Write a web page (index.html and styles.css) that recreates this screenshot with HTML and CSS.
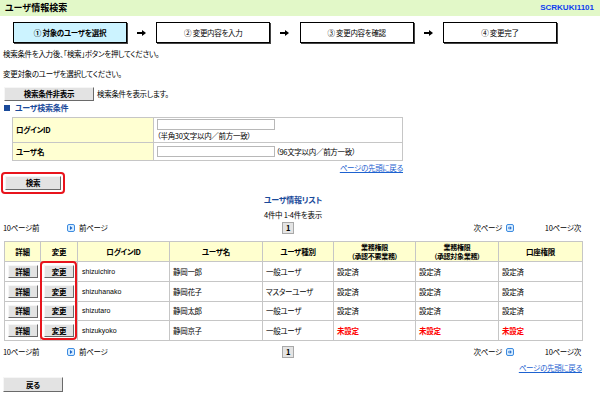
FILE: index.html
```html
<!DOCTYPE html>
<html lang="ja">
<head>
    <meta charset="UTF-8">
    <title>ユーザ情報検索</title>
    <link rel="stylesheet" href="styles.css">
</head>
<body>
    <div class="page-head">
        <span class="page-title">ユーザ情報検索</span>
        <span class="screen-id">SCRKUKI1101</span>
    </div>

    <div class="steps">
        <div class="step current">① 対象のユーザを選択</div>
        <div class="step-arrow"><svg width="9" height="6" viewBox="0 0 9 6"><path d="M0 3H6" stroke="#000" stroke-width="2"/><path d="M5 0L9 3L5 6Z" fill="#000"/></svg></div>
        <div class="step">② 変更内容を入力</div>
        <div class="step-arrow"><svg width="9" height="6" viewBox="0 0 9 6"><path d="M0 3H6" stroke="#000" stroke-width="2"/><path d="M5 0L9 3L5 6Z" fill="#000"/></svg></div>
        <div class="step">③ 変更内容を確認</div>
        <div class="step-arrow"><svg width="9" height="6" viewBox="0 0 9 6"><path d="M0 3H6" stroke="#000" stroke-width="2"/><path d="M5 0L9 3L5 6Z" fill="#000"/></svg></div>
        <div class="step">④ 変更完了</div>
    </div>

    <p class="msg msg-first">検索条件を入力後、「検索」ボタンを押してください。</p>
    <p class="msg msg-second">変更対象のユーザを選択してください。</p>

    <div class="toggle-row">
        <button class="btn btn-toggle">検索条件非表示</button>
        <span class="toggle-note">検索条件を表示します。</span>
    </div>

    <div class="sec-title"><span class="sec-mark"></span>ユーザ検索条件</div>

    <table class="cond">
        <tr class="cond-row-id">
            <th>ログインID</th>
            <td>
                <input type="text" class="cond-input">
                <div class="cond-hint">（半角30文字以内／前方一致）</div>
            </td>
        </tr>
        <tr class="cond-row-name">
            <th>ユーザ名</th>
            <td>
                <input type="text" class="cond-input"><span class="cond-hint-inline">（96文字以内／前方一致）</span>
            </td>
        </tr>
    </table>
    <div class="to-top to-top-cond"><a href="#">ページの先頭に戻る</a></div>

    <div class="search-row">
        <span class="hl-box"><button class="btn btn-search">検索</button></span>
    </div>

    <div class="list-area">
        <div class="list-title">ユーザ情報リスト</div>
        <div class="list-count">4件中 1-4件を表示</div>

        <div class="pager pager-top">
            <span>10ページ前</span>
            <span class="pager-prev"><svg class="pg-icon" width="8" height="8" viewBox="0 0 8 8"><rect x="0.5" y="0.5" width="7" height="7" rx="1.5" fill="#d6ecff" stroke="#3d8be0"/><path d="M3 2L5.5 4L3 6Z" fill="#1b63c6"/></svg>前ページ</span>
            <span class="pager-num">1</span>
            <span class="pager-next">次ページ<svg class="pg-icon" width="8" height="8" viewBox="0 0 8 8"><rect x="0.5" y="0.5" width="7" height="7" rx="1.5" fill="#d6ecff" stroke="#3d8be0"/><path d="M2 4H5M3.8 2.6L5.3 4L3.8 5.4" stroke="#1b63c6" stroke-width="1" fill="none"/></svg></span>
            <span class="pager-end">10ページ次</span>
        </div>

        <div class="list-wrap">
            <table class="list">
                <colgroup>
                    <col class="c-detail"><col class="c-edit"><col class="c-id"><col class="c-name">
                    <col class="c-kind"><col class="c-auth"><col class="c-auth2"><col class="c-acct">
                </colgroup>
                <tr class="list-head">
                    <th>詳細</th>
                    <th>変更</th>
                    <th>ログインID</th>
                    <th>ユーザ名</th>
                    <th>ユーザ種別</th>
                    <th class="th-two">業務権限<br>（承認不要業務）</th>
                    <th class="th-two">業務権限<br>（承認対象業務）</th>
                    <th>口座権限</th>
                </tr>
                <tr>
                    <td class="cell-btn"><button class="btn btn-row">詳細</button></td>
                    <td class="cell-btn"><button class="btn btn-row">変更</button></td>
                    <td class="login-id">shizuichiro</td>
                    <td>静岡一郎</td>
                    <td>一般ユーザ</td>
                    <td>設定済</td>
                    <td>設定済</td>
                    <td>設定済</td>
                </tr>
                <tr>
                    <td class="cell-btn"><button class="btn btn-row">詳細</button></td>
                    <td class="cell-btn"><button class="btn btn-row">変更</button></td>
                    <td class="login-id">shizuhanako</td>
                    <td>静岡花子</td>
                    <td>マスターユーザ</td>
                    <td>設定済</td>
                    <td>設定済</td>
                    <td>設定済</td>
                </tr>
                <tr class="row-short">
                    <td class="cell-btn"><button class="btn btn-row">詳細</button></td>
                    <td class="cell-btn"><button class="btn btn-row">変更</button></td>
                    <td class="login-id">shizutaro</td>
                    <td>静岡太郎</td>
                    <td>一般ユーザ</td>
                    <td>設定済</td>
                    <td>設定済</td>
                    <td>設定済</td>
                </tr>
                <tr>
                    <td class="cell-btn"><button class="btn btn-row">詳細</button></td>
                    <td class="cell-btn"><button class="btn btn-row">変更</button></td>
                    <td class="login-id">shizukyoko</td>
                    <td>静岡京子</td>
                    <td>一般ユーザ</td>
                    <td class="unset">未設定</td>
                    <td class="unset">未設定</td>
                    <td class="unset">未設定</td>
                </tr>
            </table>
            <div class="hl-col"></div>
        </div>

        <div class="pager pager-bottom">
            <span>10ページ前</span>
            <span class="pager-prev"><svg class="pg-icon" width="8" height="8" viewBox="0 0 8 8"><rect x="0.5" y="0.5" width="7" height="7" rx="1.5" fill="#d6ecff" stroke="#3d8be0"/><path d="M3 2L5.5 4L3 6Z" fill="#1b63c6"/></svg>前ページ</span>
            <span class="pager-num">1</span>
            <span class="pager-next">次ページ<svg class="pg-icon" width="8" height="8" viewBox="0 0 8 8"><rect x="0.5" y="0.5" width="7" height="7" rx="1.5" fill="#d6ecff" stroke="#3d8be0"/><path d="M2 4H5M3.8 2.6L5.3 4L3.8 5.4" stroke="#1b63c6" stroke-width="1" fill="none"/></svg></span>
            <span class="pager-end">10ページ次</span>
        </div>

        <div class="to-top to-top-list"><a href="#">ページの先頭に戻る</a></div>
    </div>

    <button class="btn btn-back">戻る</button>
</body>
</html>
```

FILE: styles.css
```css
body {
    margin: 0;
    font-family: "Noto Sans CJK JP", sans-serif;
    font-feature-settings: "palt";
    font-size: 7.5px;
    letter-spacing: -0.3px;
    line-height: 10px;
    color: #000;
    background: #fff;
}
.page-head {
    height: 16px;
    background: #e2f8c8;
    display: flex;
    justify-content: space-between;
    align-items: center;
    padding: 0 6px 0 5px;
}
.page-title {
    font-size: 9px;
    font-weight: bold;
    letter-spacing: 0;
}
.screen-id {
    font-family: "Liberation Sans", sans-serif;
    font-size: 8px;
    font-weight: bold;
    letter-spacing: 0;
    color: #0d3ef0;
}
.steps {
    display: flex;
    justify-content: space-between;
    align-items: center;
    width: 544px;
    height: 21px;
    margin: 6px 0 0 13px;
}
.step {
    box-sizing: border-box;
    width: 114px;
    height: 21px;
    border: 1px solid #000;
    box-shadow: 1px 1px 0 #444;
    display: flex;
    align-items: center;
    justify-content: center;
    background: #fff;
}
.step.current {
    background: #ccf3ff;
    font-weight: bold;
}
.step-arrow {
    width: 10px;
    display: flex;
    justify-content: center;
}
.msg {
    margin: 0 0 0 3px;
    height: 10px;
}
.msg-first { margin-top: 6px; }
.msg-second { margin-top: 10px; }
.btn {
    font-family: inherit;
    font-feature-settings: "palt";
    font-size: 7.5px;
    font-weight: bold;
    letter-spacing: -0.3px;
    line-height: 10px;
    color: #000;
    background: #e3e3e3;
    border: 1px solid;
    border-color: #f6f6f6 #6a6a6a #6a6a6a #f6f6f6;
    padding: 0;
    box-sizing: border-box;
}
.toggle-row {
    display: flex;
    align-items: center;
    margin: 8px 0 0 4px;
    height: 14px;
}
.btn-toggle {
    width: 90px;
    height: 14px;
}
.toggle-note {
    margin-left: 3px;
}
.sec-title {
    margin: 2px 0 0 4px;
    height: 10px;
    display: flex;
    align-items: center;
    font-size: 8px;
    font-weight: bold;
    color: #1a4a9a;
}
.sec-mark {
    width: 6px;
    height: 6px;
    background: #1a4a9a;
    margin-right: 5px;
}
.cond {
    margin: 4px 0 0 12px;
    width: 391px;
    border-collapse: collapse;
}
.cond th, .cond td {
    border: 1px solid #c6c6c6;
    padding: 0 3px;
    text-align: left;
    vertical-align: middle;
}
.cond th {
    width: 134px;
    background: #ffffd2;
    font-weight: bold;
}
.cond-row-id { height: 25px; }
.cond-row-name { height: 18px; }
.cond-input {
    box-sizing: border-box;
    width: 118px;
    height: 11px;
    border: 1px solid #b8b8b8;
    margin: 0;
    padding: 0;
    vertical-align: middle;
}
.cond-hint {
    margin-top: 1px;
}
.cond-hint-inline {
    margin-left: 1px;
    vertical-align: middle;
}
.to-top {
    text-align: right;
    height: 9px;
    line-height: 9px;
}
.to-top a {
    color: #1d62d0;
}
.to-top-cond {
    width: 391px;
    margin: 2px 0 0 12px;
}
.search-row {
    margin: 0 0 0 1px;
    height: 22px;
}
.hl-box {
    display: inline-block;
    border: 2px solid #e8141c;
    border-radius: 4px;
    padding: 2px;
}
.btn-search {
    display: block;
    width: 56px;
    height: 14px;
}
.list-area {
    width: 578px;
    margin-left: 4px;
}
.list-title {
    margin-top: 1px;
    height: 10px;
    text-align: center;
    font-size: 8px;
    font-weight: bold;
    color: #1a4a9a;
}
.list-count {
    margin-top: 5px;
    height: 10px;
    text-align: center;
}
.pager {
    display: grid;
    grid-template-columns: 64px 215px 12px 220px 67px;
    align-items: center;
    height: 12px;
    margin-left: -1px;
}
.pager-top { margin-top: 2px; }
.pager-bottom { margin-top: 5px; }
.pager-prev, .pager-next {
    display: flex;
    align-items: center;
}
.pager-next {
    justify-content: flex-end;
}
.pg-icon {
    margin: 0 4px;
}
.pager-prev .pg-icon { margin-left: 0; }
.pager-next .pg-icon { margin-right: 0; }
.pager-num {
    box-sizing: border-box;
    height: 12px;
    border: 1px solid #a8a8a8;
    background: #e4e4e4;
    text-align: center;
    font-weight: bold;
    line-height: 10px;
}
.pager-end {
    text-align: right;
}
.list-wrap {
    position: relative;
    margin-top: 7px;
}
.list {
    width: 578px;
    border-collapse: collapse;
    table-layout: fixed;
}
.c-detail { width: 36px; }
.c-edit { width: 37px; }
.c-id { width: 92px; }
.c-name { width: 93px; }
.c-kind { width: 71px; }
.c-auth { width: 82px; }
.c-auth2 { width: 83px; }
.c-acct { width: 84px; }
.list th, .list td {
    border: 1px solid #c6c6c6;
    padding: 0 0 0 3px;
    text-align: left;
    vertical-align: middle;
    white-space: nowrap;
}
.list th {
    background: #ffffcf;
    text-align: center;
    font-weight: bold;
    line-height: 9px;
    padding: 0;
}
.list th.th-two {
    font-size: 7px;
}
.list-head { height: 20px; }
.list tr { height: 20px; }
.list tr.row-short { height: 19px; }
.list td.cell-btn {
    padding: 0;
    text-align: center;
}
.btn-row {
    width: 30px;
    height: 13px;
    display: inline-block;
    vertical-align: middle;
}
.list td.login-id {
    font-family: "Liberation Sans", sans-serif;
    font-size: 7px;
    letter-spacing: 0;
    padding-left: 4px;
}
.list td.unset {
    color: #f00;
    font-weight: bold;
}
.hl-col {
    position: absolute;
    left: 36px;
    top: 20px;
    width: 37px;
    height: 79px;
    box-sizing: border-box;
    border: 2px solid #e8141c;
    border-radius: 4px;
}
.to-top-list {
    margin-top: 5px;
    height: 10px;
}
.btn-back {
    display: block;
    margin: 4px 0 0 3px;
    width: 60px;
    height: 15px;
}
```
